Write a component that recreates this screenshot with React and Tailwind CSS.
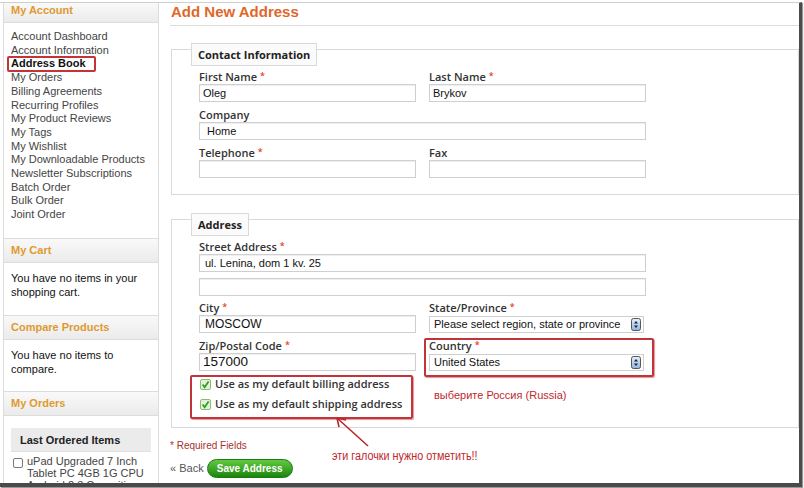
import React from 'react';

const links = [
  'Account Dashboard',
  'Account Information',
  'Address Book',
  'My Orders',
  'Billing Agreements',
  'Recurring Profiles',
  'My Product Reviews',
  'My Tags',
  'My Wishlist',
  'My Downloadable Products',
  'Newsletter Subscriptions',
  'Batch Order',
  'Bulk Order',
  'Joint Order',
];

function SideHeader({ children, first }) {
  return (
    <div
      className={`pl-[7px] leading-[14px] text-[11px] font-bold text-[#df9a2f] bg-gradient-to-b from-[#f9f9f9] to-[#ebebeb] border-b border-[#dcdcdc] ${
        first ? 'h-[20px]' : 'h-[25px] pt-[4px] border-t'
      }`}
    >
      {children}
    </div>
  );
}

function SpinIcon() {
  return (
    <svg width="10" height="13" viewBox="0 0 10 13">
      <defs>
        <linearGradient id="spin" x1="0" y1="0" x2="0" y2="1">
          <stop offset="0" stopColor="#e6f0fb" />
          <stop offset="1" stopColor="#8fb3e3" />
        </linearGradient>
      </defs>
      <rect x="0.5" y="0.5" width="9" height="12" rx="2" fill="url(#spin)" stroke="#555" />
      <path d="M3 5.6 L5 3 L7 5.6 Z" fill="#222" />
      <path d="M3 7.4 L5 10 L7 7.4 Z" fill="#222" />
    </svg>
  );
}

function GreenCheck() {
  return (
    <svg width="11" height="11" viewBox="0 0 11 11" className="shrink-0">
      <rect x="0.5" y="0.5" width="10" height="10" rx="1.5" fill="#e2f3d6" stroke="#8cb97b" />
      <path d="M2.6 5.6 L4.6 8.2 L8.6 2.4" fill="none" stroke="#2f9b1f" strokeWidth="1.7" />
    </svg>
  );
}

function Label({ children, req }) {
  return (
    <div className="h-[14px] leading-[14px] text-[11px] font-semibold text-[#333] font-['Open_Sans',sans-serif] whitespace-nowrap">
      {children}
      {req && <span className="ml-[3px] text-[9px] text-[#e8401c] relative -top-[2px]">*</span>}
    </div>
  );
}

function Input({ value, w = 'w-[217px]', text = 'text-[11px]', pl = 'pl-[3px]' }) {
  return (
    <div
      className={`${w} h-[18px] border border-[#cfcfcf] bg-white shadow-[inset_0_1px_1px_#eee] ${pl} ${text} leading-[16px] text-[#111] whitespace-nowrap overflow-hidden`}
    >
      {value}
    </div>
  );
}

function Select({ value }) {
  return (
    <div className="w-[215px] h-[17px] mt-[1px] border border-[#cfcfcf] bg-white flex items-center justify-between pl-[4px] pr-[2px] text-[11px] text-[#111]">
      <span className="leading-[15px]">{value}</span>
      <SpinIcon />
    </div>
  );
}

function Fieldset({ legend, className, children }) {
  return (
    <div className={`ml-[1px] border border-[#d9d9d9] ${className}`}>
      <div className="-mt-[7px] ml-[19px] w-fit h-[23px] border border-[#d9d9d9] bg-[#fbfbfb] px-[6px] leading-[21px] text-[11px] font-bold text-[#222] font-['Open_Sans',sans-serif]">
        {legend}
      </div>
      <div className="pl-[27px] mt-[4px]">{children}</div>
    </div>
  );
}

export default function App() {
  return (
    <div className="relative w-[804px] h-[488px] bg-white pt-[2px] overflow-hidden font-['Liberation_Sans',Arial,sans-serif]">
      <div className="w-[802px] h-[485px] flex overflow-hidden border-t border-t-[#cfcfcf] border-r-[3px] border-r-[#4a4a4a] border-b-[4px] border-b-[#4a4a4a] shadow-[1px_1px_1px_#9a9a9a]">
        {/* sidebar */}
        <aside className="ml-[3px] w-[156px] shrink-0 border-x border-[#dcdcdc] text-[11px] text-[#444]">
          <SideHeader first>My Account</SideHeader>
          <ul className="pt-[7px] pb-[16px] pl-[7px] leading-[13.7px]">
            {links.map((l) =>
              l === 'Address Book' ? (
                <li key={l} className="relative font-bold text-[#111]">
                  <span className="absolute -left-[4px] -top-[1px] w-[89px] h-[16px] border-2 border-[#c3343a] rounded-[2px]" />
                  {l}
                </li>
              ) : (
                <li key={l}>{l}</li>
              )
            )}
          </ul>
          <SideHeader>My Cart</SideHeader>
          <div className="pt-[8px] pb-[16px] pl-[7px] leading-[14px] text-[#111]">
            You have no items in your
            <br />
            shopping cart.
          </div>
          <SideHeader>Compare Products</SideHeader>
          <div className="pt-[8px] pb-[15px] pl-[7px] leading-[14px] text-[#111]">
            You have no items to
            <br />
            compare.
          </div>
          <SideHeader>My Orders</SideHeader>
          <div className="pt-[12px]">
            <div className="mx-[7px] h-[24px] bg-[#ebebeb] border-b border-[#e0e0e0] pl-[9px] leading-[24px] font-bold text-[#222]">
              Last Ordered Items
            </div>
            <div className="mt-[3px] ml-[9px] flex gap-[4px]">
              <span className="mt-[3px] w-[10px] h-[10px] shrink-0 border border-[#777] rounded-[2px] bg-white" />
              <div className="w-[118px] leading-[12px] text-[#444] whitespace-nowrap overflow-hidden">
                <div>uPad Upgraded 7 Inch</div>
                <div>Tablet PC 4GB 1G CPU</div>
                <div>Android 2.3 Capacitive</div>
              </div>
            </div>
          </div>
        </aside>

        {/* main */}
        <main className="flex-1 ml-[11px] min-w-0">
          <h1 className="pl-[1px] pb-[4px] leading-[18px] text-[15px] font-bold text-[#e0672a] border-b border-[#dcdcdc]">
            Add New Address
          </h1>

          <Fieldset legend="Contact Information" className="mt-[23px] pb-[16px]">
            <div className="grid grid-cols-[217px_217px] gap-x-[13px]">
              <div>
                <Label req>First Name</Label>
                <Input value="Oleg" />
              </div>
              <div>
                <Label req>Last Name</Label>
                <Input value="Brykov" />
              </div>
            </div>
            <div className="mt-[6px]">
              <Label>Company</Label>
              <Input value="Home" w="w-[447px]" pl="pl-[7px]" />
            </div>
            <div className="mt-[6px] grid grid-cols-[217px_217px] gap-x-[13px]">
              <div>
                <Label req>Telephone</Label>
                <Input value="" />
              </div>
              <div>
                <Label>Fax</Label>
                <Input value="" />
              </div>
            </div>
          </Fieldset>

          <Fieldset legend="Address" className="mt-[24px] pb-[8px]">
            <Label req>Street Address</Label>
            <Input value="ul. Lenina, dom 1 kv. 25" w="w-[447px]" pl="pl-[5px]" />
            <div className="mt-[6px]">
              <Input value="" w="w-[447px]" />
            </div>
            <div className="mt-[5px] grid grid-cols-[217px_217px] gap-x-[13px]">
              <div>
                <Label req>City</Label>
                <Input value="MOSCOW" text="text-[12px]" pl="pl-[5px]" />
              </div>
              <div>
                <Label req>State/Province</Label>
                <Select value="Please select region, state or province" />
              </div>
            </div>
            <div className="mt-[6px] grid grid-cols-[217px_217px] gap-x-[13px]">
              <div>
                <Label req>Zip/Postal Code</Label>
                <Input value="157000" text="text-[13.5px]" />
              </div>
              <div className="relative">
                <span className="absolute -left-[5px] -top-[1px] -right-[8px] -bottom-[6px] border-2 border-[#c3343a] rounded-[2px] shadow-[1px_1px_1px_#d99]" />
                <Label req>Country</Label>
                <Select value="United States" />
              </div>
            </div>
            <div className="mt-[4px] grid grid-cols-[217px_217px] gap-x-[13px]">
              <div className="-ml-[9px] w-[223px] border-2 border-[#c3343a] rounded-[2px] pl-[8px] pb-[6px] flex flex-col gap-[6px] shadow-[1px_1px_1px_#d99]">
                {['Use as my default billing address', 'Use as my default shipping address'].map((t) => (
                  <div key={t} className="h-[14px] flex items-center gap-[4px]">
                    <GreenCheck />
                    <span className="text-[11px] font-semibold text-[#333] font-['Open_Sans',sans-serif] whitespace-nowrap">
                      {t}
                    </span>
                  </div>
                ))}
              </div>
              <div className="pt-[13px] pl-[5px] leading-[14px] text-[11px] text-[#c0282d] whitespace-nowrap">
                выберите Россия (Russia)
              </div>
            </div>
          </Fieldset>

          <p className="mt-[11px] leading-[14px] text-[10px] text-[#a8322d]">* Required Fields</p>
          <div className="mt-[6px] flex items-center">
            <span className="text-[11px] text-[#555]">« Back</span>
            <button className="ml-[3px] w-[86px] h-[19px] rounded-full border border-[#1b7a10] bg-gradient-to-b from-[#62c940] to-[#17870c] text-white text-[10px] font-bold leading-[17px]">
              Save Address
            </button>
          </div>
        </main>
      </div>

      {/* annotations */}
      <svg className="absolute left-[330px] top-[412px]" width="44" height="40" viewBox="0 0 44 40">
        <path d="M38 34 L7 6" stroke="#b8282d" strokeWidth="1.6" fill="none" />
        <path d="M7 6 L9 15 M7 6 L16 8" stroke="#b8282d" strokeWidth="1.6" fill="none" />
      </svg>
      <div className="absolute left-[332px] top-[449px] origin-left scale-x-[0.9] leading-[14px] text-[12px] text-[#c0282d] font-['Liberation_Sans',Arial,sans-serif] whitespace-nowrap">
        эти галочки нужно отметить!!
      </div>
    </div>
  );
}
